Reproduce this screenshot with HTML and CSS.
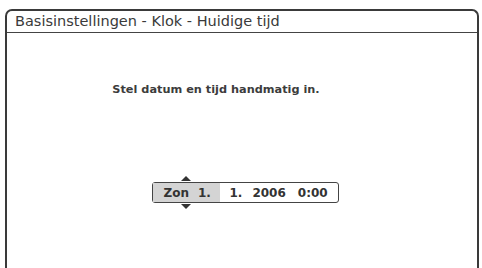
FILE: index.html
```html
<!DOCTYPE html>
<html>
<head>
<meta charset="utf-8">
<link rel="stylesheet" href="styles.css">
</head>
<body>
<div class="screen">
  <div class="title">Basisinstellingen - Klok - Huidige tijd</div>
  <div class="content">
    <p class="msg">Stel datum en tijd handmatig in.</p>
    <div class="field">
      <div class="sel">
        <span class="arrow up"></span>
        <span class="day">Zon</span><span class="d">1.</span>
        <span class="arrow down"></span>
      </div>
      <span class="m">1.</span>
      <span class="y">2006</span>
      <span class="t">0:00</span>
    </div>
  </div>
</div>
</body>
</html>
```
FILE: styles.css
```css
html, body {
  margin: 0;
  padding: 0;
  background: #fff;
}
body {
  width: 482px;
  height: 268px;
  overflow: hidden;
  font-family: "DejaVu Sans", "Liberation Sans", sans-serif;
  color: #3a3a3a;
}
.screen {
  margin: 9px 3px 0 5px;
  height: 270px;
  border: 2px solid #3a3a3a;
  border-bottom: none;
  border-radius: 7px 7px 0 0;
  display: flex;
  flex-direction: column;
}
.title {
  height: 21px;
  border-bottom: 1.5px solid #444;
  padding-left: 8px;
  font-size: 14.5px;
  line-height: 21px;
  color: #3a3a3a;
}
.content {
  display: flex;
  flex-direction: column;
  align-items: center;
}
.msg {
  margin: 50px 0 0 0;
  font-size: 11.3px;
  font-weight: bold;
  color: #3c3c3c;
  padding-right: 52px;
}
.field {
  margin-top: 86px;
  margin-left: 6px;
  width: 185px;
  height: 19px;
  border: 1.5px solid #444;
  border-radius: 3px;
  display: flex;
  align-items: center;
  font-size: 12px;
  font-weight: bold;
  color: #333;
}
.sel {
  position: relative;
  background: #d4d4d4;
  height: 100%;
  width: 67px;
  display: flex;
  align-items: center;
  padding-left: 11px;
  box-sizing: border-box;
}
.d { margin-left: 9px; }
.m { margin-left: 10px; }
.y { margin-left: 10px; }
.t { margin-left: 12px; }
.arrow {
  position: absolute;
  left: 28px;
  width: 0;
  height: 0;
  border-left: 5px solid transparent;
  border-right: 5px solid transparent;
}
.arrow.up {
  top: -7px;
  border-bottom: 5px solid #333;
}
.arrow.down {
  bottom: -7px;
  border-top: 5px solid #333;
}
```
